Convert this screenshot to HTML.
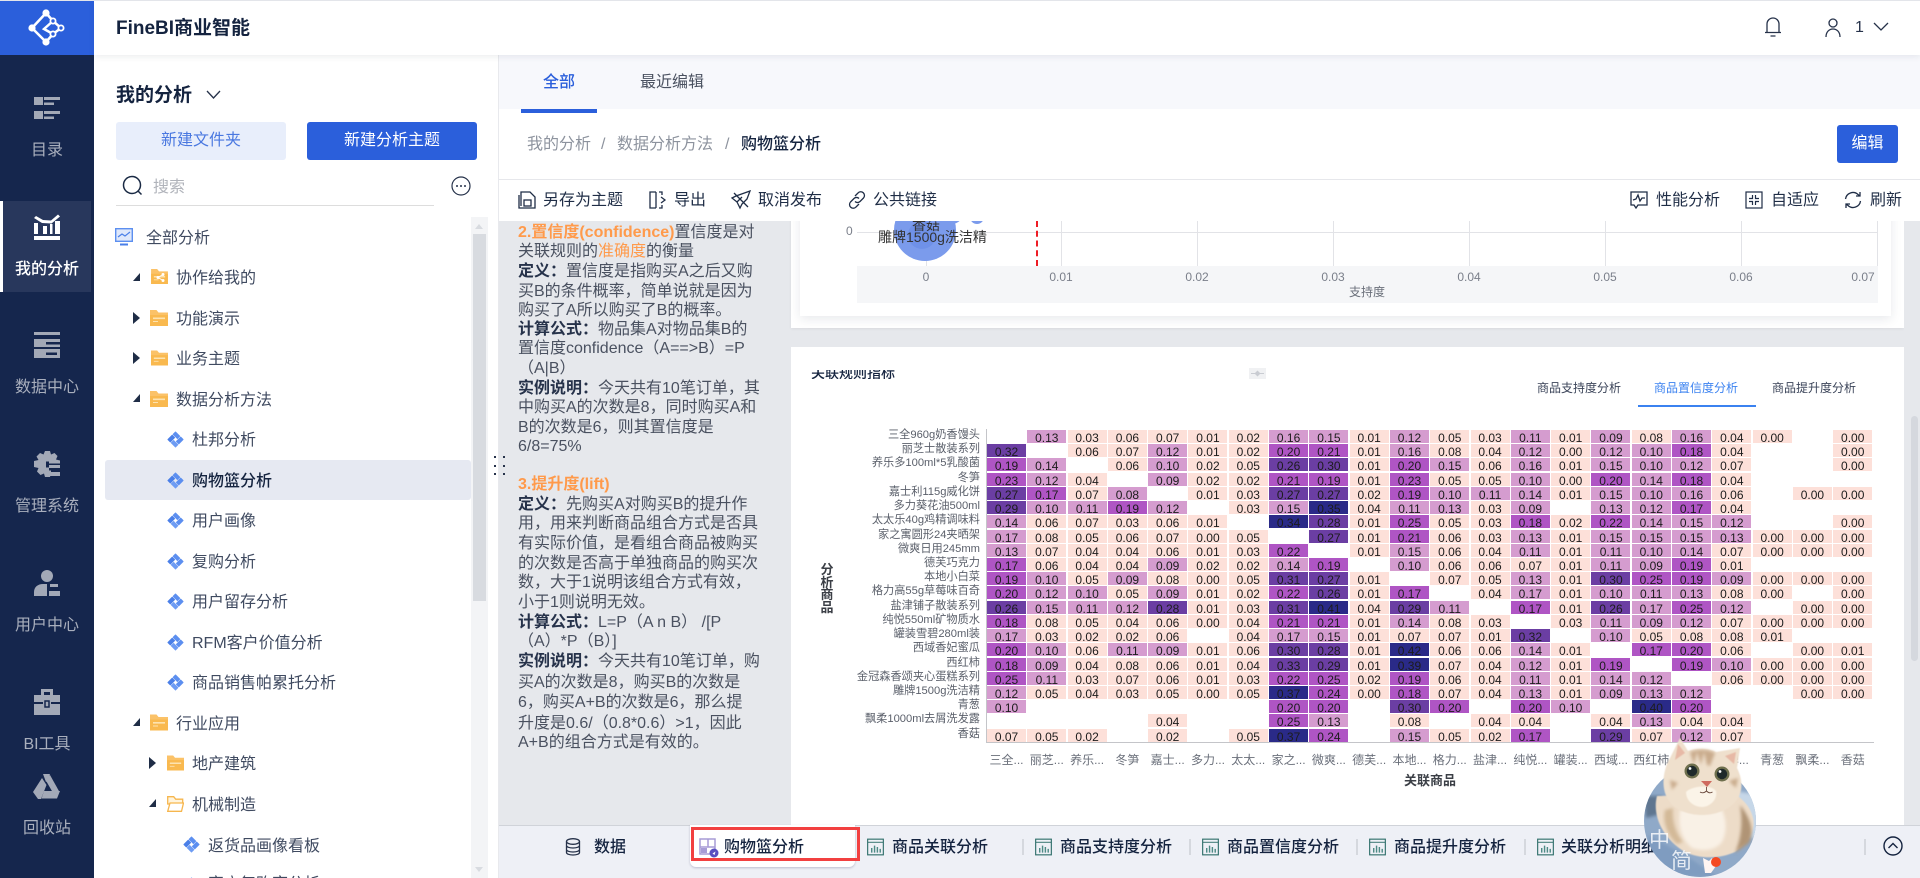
<!DOCTYPE html>
<html lang="zh">
<head>
<meta charset="utf-8">
<title>FineBI商业智能</title>
<style>
*{box-sizing:border-box}
html,body{margin:0;padding:0;width:1920px;height:878px;overflow:hidden;background:#fff;font-family:"Liberation Sans","Noto Sans CJK SC",sans-serif;color:#1f2d46}
#root{position:relative;width:1920px;height:878px;overflow:hidden}
.p{position:absolute}
.t{position:absolute;white-space:nowrap;line-height:20px;font-size:16px;margin-top:2px}
.rail{left:0;top:0;width:94px;height:878px;background:#15264d}
.r{left:0;width:94px;text-align:center;color:#a9afbd}
.tree{color:#3f4a60}
.g{fill:#a3a9b7}
.col{color:#4a5160}
.col .t{margin-top:1px}
.col b{color:#26324a;font-weight:700}
.col u{text-decoration:none;color:#ff9a4b;font-weight:700}
.col s{text-decoration:none;color:#ff9a4b}
.hm{position:absolute;left:987px;top:430px;display:grid;grid-template-columns:repeat(22,39px);grid-auto-rows:13px;column-gap:1.3px;row-gap:1.23px}
.hm i{font-style:normal;font-size:12px;line-height:16px;text-align:center;color:#1c1c1c;overflow:hidden;display:block}
.a{background:#fde0d9}.b{background:#d59ccf}.c{background:#af55c4}.d{background:#6b3ea3}.e{background:#2a2a88}
.rl{position:absolute;left:800px;width:180px;top:429px;display:grid;grid-auto-rows:13px;row-gap:1.23px;text-align:right;font-size:11.2px;line-height:13px;color:#5a5f6a;white-space:nowrap}
.xl{position:absolute;left:987px;top:753px;display:grid;grid-template-columns:repeat(22,39px);column-gap:1.3px;text-align:center;font-size:12px;line-height:14px;color:#6a6f7a;white-space:nowrap}
.tick{position:absolute;width:56px;text-align:center;font-size:12px;line-height:14px;top:270px;color:#7a7f8a}
.vg{position:absolute;top:221px;width:1px;height:45px;background:#e2e3e7}
.sep{position:absolute;top:839px;width:2px;height:16px;background:#d5d8de}
.bt{position:absolute;top:838px;line-height:20px;font-size:16px;font-weight:500;color:#14233f;white-space:nowrap}
</style>
</head>
<body>
<div id="root">
<svg width="0" height="0" style="position:absolute">
<defs>
<symbol id="fold" viewBox="0 0 18 16"><path d="M0 0h6.500l2 2.500H18V16H0z" fill="#fbc268"/><path d="M0 5h18v11H0z" fill="#f9b94f"/><path d="M3 7.500h12v1.600H3zM3 11h5v1H3z" fill="#fde3b0"/></symbol>
<symbol id="dia" viewBox="0 0 18 18"><g stroke-width="1" stroke-linejoin="round"><path d="M9 1l4.500 4.500L11 8 6.500 3.500z" fill="#5c8ff0" stroke="#5c8ff0"/><path d="M17 9l-4.500 4.500L10 11l4.500-4.500z" fill="#5c8ff0" stroke="#5c8ff0"/><path d="M9 17l-4.500-4.500L7 10l4.500 4.500z" fill="#6e9cf3" stroke="#6e9cf3"/><path d="M1 9l4.500-4.500L8 7l-4.500 4.500z" fill="#4a7fe8" stroke="#4a7fe8"/></g></symbol>
<symbol id="bar" viewBox="0 0 18 18"><rect x=".7" y=".7" width="16.600" height="16.600" fill="none" stroke="#2f6f6a" stroke-width="1.200"/><path d="M1 4h16" stroke="#2f6f6a"/><path d="M5 10v5M8 7.500v7.500M11 9v6M14 11v4" stroke="#4d8a85" stroke-width="1.500"/></symbol>
</defs>
</svg>

<!-- left rail -->
<div class="p" style="left:0;top:0;width:1920px;height:1px;background:#e3e5ea;z-index:9"></div>
<div class="p rail"></div>
<div class="p" style="left:0;top:1px;width:94px;height:54px;background:#2b5fdb"></div>
<svg class="p" style="left:26px;top:6px" width="42" height="42" viewBox="26 6 42 42">
<g stroke="#fff" stroke-width="2.500" fill="none"><path d="M46 13L32 28l14 14M46 13l7 8 8 7-8 6-7 8M53 21l-9 8 9 5"/></g>
<g fill="#fff"><circle cx="46" cy="13" r="3.600"/><circle cx="32" cy="28" r="3.600"/><circle cx="46" cy="42" r="3.600"/></g>
<g fill="#2b5fdb" stroke="#fff" stroke-width="1.800"><circle cx="53" cy="21" r="2.600"/><circle cx="61" cy="28" r="2.600"/><circle cx="53" cy="34" r="2.600"/></g>
</svg>
<svg class="p" style="left:34px;top:97px" width="26" height="22" viewBox="0 0 26 22"><g class="g"><rect width="9" height="8"/><rect y="14" width="9" height="8"/><rect x="10" width="16" height="3"/><rect x="10" y="5.500" width="10" height="2.500"/><rect x="10" y="14" width="16" height="3"/><rect x="10" y="19.500" width="10" height="2.500"/></g></svg>
<div class="t r" style="top:139px">目录</div>
<div class="p" style="left:0;top:201px;width:91px;height:91px;background:#28375c"></div>
<div class="p" style="left:0;top:201px;width:3px;height:91px;background:#fff"></div>
<svg class="p" style="left:34px;top:214px" width="26" height="26" viewBox="0 0 26 26"><g fill="#fff"><rect y="22" width="26" height="4"/><rect y="9" width="4" height="11"/><rect x="9" y="12" width="4" height="8"/><rect x="16" y="10" width="2.500" height="10"/><rect x="21" y="7" width="5" height="13"/><path d="M0 4l2-2 7 4 8 .5 7-6 2 2-8.500 7L8 9z"/></g></svg>
<div class="t r" style="top:258px;color:#fff;font-weight:500">我的分析</div>
<svg class="p" style="left:34px;top:332px" width="26" height="26" viewBox="0 0 26 26"><g class="g"><rect width="26" height="3"/><rect y="7" width="26" height="8"/><rect y="17" width="26" height="9"/></g><rect x="12" y="10" width="14" height="2.500" fill="#15264d"/><rect x="12" y="20.500" width="11" height="2.500" fill="#15264d"/></svg>
<div class="t r" style="top:376px">数据中心</div>
<svg class="p" style="left:34px;top:451px" width="26" height="26" viewBox="0 0 26 26"><path class="g" d="M11 0h5l1 3.500 3.500-1.500 3 3L22 8.500l4 1v3h-11v-2h-3v6h3v3h2v3l-1 3.500h-5l-1-3.500-3.500 1.500-3.500-3.500L4.500 17 0 16v-6l4.500-1L2.500 5.500 6 2l3.500 1.500z"/><rect class="g" x="15" y="14" width="11" height="3"/><rect class="g" x="15" y="21" width="11" height="4"/></svg>
<div class="t r" style="top:495px">管理系统</div>
<svg class="p" style="left:34px;top:570px" width="26" height="26" viewBox="0 0 26 26"><g class="g"><circle cx="13" cy="6" r="6"/><path d="M0 26v-4c0-5 4-8 9-8h4v12z"/><rect x="16" y="14" width="8" height="3"/><rect x="15" y="21" width="11" height="5"/></g></svg>
<div class="t r" style="top:614px">用户中心</div>
<svg class="p" style="left:34px;top:689px" width="26" height="26" viewBox="0 0 26 26"><g class="g"><path d="M7 6V0h12v6h-3V3h-6v3z"/><rect y="6" width="26" height="7"/><path d="M0 15h9v-2h8v2h9v11H0z"/></g><rect x="11" y="12" width="4" height="6" fill="#a3a9b7" stroke="#15264d" stroke-width="1.500"/></svg>
<div class="t r" style="top:733px">BI工具</div>
<svg class="p" style="left:33px;top:774px" width="27" height="25" viewBox="0 0 27 25"><g class="g"><path d="M10 0h7l-3 7-1 1z"/><path d="M17 1l9.500 17h-7L12 5z"/><path d="M9 4l4.500 7L8 25H5L0 18z"/><path d="M11 17h16l-3 7.500H8.500z"/></g></svg>
<div class="t r" style="top:817px">回收站</div>

<!-- header -->
<div class="p" style="left:94px;top:1px;width:1826px;height:54px;background:#fff;box-shadow:0 2px 6px rgba(30,40,70,.08);z-index:3"></div>
<div class="t" style="left:116px;top:17px;font-size:19px;font-weight:700;color:#14233f;z-index:4">FineBI商业智能</div>
<svg class="p" style="left:1764px;top:16px;z-index:4" width="18" height="22" viewBox="0 0 18 22" fill="none" stroke="#26324a" stroke-width="1.300"><path d="M3 16V8a6 6 0 0 1 12 0v8M1 16.500h16M6.500 20h5"/></svg>
<svg class="p" style="left:1824px;top:17px;z-index:4" width="18" height="22" viewBox="0 0 18 22" fill="none" stroke="#26324a" stroke-width="1.300"><circle cx="9" cy="6" r="4"/><path d="M2 20c0-5 3-8 7-8s7 3 7 8"/></svg>
<div class="t" style="left:1855px;top:16px;font-size:16px;color:#26324a;z-index:4">1</div>
<svg class="p" style="left:1873px;top:22px;z-index:4" width="16" height="10" viewBox="0 0 16 10" fill="none" stroke="#26324a" stroke-width="1.300"><path d="M1 1l7 7 7-7"/></svg>

<!-- tree panel -->
<div class="t" style="left:116px;top:84px;font-size:19px;font-weight:700;color:#14233f">我的分析</div>
<svg class="p" style="left:206px;top:90px" width="15" height="10" viewBox="0 0 15 10" fill="none" stroke="#26324a" stroke-width="1.300"><path d="M1 1l6.500 7L14 1"/></svg>
<div class="p" style="left:116px;top:122px;width:170px;height:38px;background:#e8eefb;border-radius:3px;text-align:center;line-height:38px;font-size:16px;color:#4a78e0">新建文件夹</div>
<div class="p" style="left:307px;top:122px;width:170px;height:38px;background:#2b5fdb;border-radius:3px;text-align:center;line-height:38px;font-size:16px;color:#fff">新建分析主题</div>
<svg class="p" style="left:122px;top:175px" width="21" height="21" viewBox="0 0 21 21" fill="none" stroke="#1a2a44" stroke-width="1.500"><circle cx="10" cy="10" r="8.500"/><path d="M16 16l3.500 3.500"/></svg>
<div class="t" style="left:153px;top:176px;color:#b0b3ba">搜索</div>
<div class="p" style="left:116px;top:205px;width:318px;height:1px;background:#ddd"></div>
<svg class="p" style="left:451px;top:176px" width="20" height="20" viewBox="0 0 20 20"><circle cx="10" cy="10" r="9" fill="none" stroke="#26324a" stroke-width="1.200"/><g fill="#26324a"><circle cx="6" cy="10" r="1"/><circle cx="10" cy="10" r="1"/><circle cx="14" cy="10" r="1"/></g></svg>
<div class="p" style="left:471px;top:217px;width:17px;height:661px;background:#f3f4f6"></div>
<div class="p" style="left:473px;top:234px;width:13px;height:367px;background:#d8dbe0"></div>
<div class="p" style="left:475px;top:224px;width:0;height:0;border:4px solid transparent;border-bottom:5px solid #d8dbe0;border-top:0"></div>
<div class="p" style="left:475px;top:867px;width:0;height:0;border:4px solid transparent;border-top:5px solid #d8dbe0;border-bottom:0"></div>
<div class="p" style="left:105px;top:460px;width:366px;height:40px;background:#e6e9f2;border-radius:3px"></div>

<svg class="p" style="left:115px;top:228px" width="18" height="18" viewBox="0 0 18 18"><rect x=".7" y=".7" width="16.600" height="12.600" fill="#dfe8fb" stroke="#5c8ff0" stroke-width="1.400"/><path d="M3 9l4-3 3 2 5-4" fill="none" stroke="#4a7fe8" stroke-width="1.200"/><rect x="5" y="15.500" width="8" height="2" fill="#4a7fe8"/></svg>
<div class="t tree" style="left:146px;top:227px">全部分析</div>

<svg class="p" style="left:133px;top:273px" width="7" height="8" viewBox="0 0 7 8"><path d="M7 0v8H0z" fill="#1f2d46"/></svg>
<svg class="p" style="left:151px;top:269px" width="17" height="15"><use href="#fold"/></svg>
<svg class="p" style="left:156px;top:273px" width="9" height="9" viewBox="0 0 9 9" fill="#fff"><circle cx="2" cy="4.500" r="1.500"/><circle cx="7" cy="1.500" r="1.500"/><circle cx="7" cy="7.500" r="1.500"/><path d="M2 4.500L7 1.500M2 4.500L7 7.500" stroke="#fff"/></svg>
<div class="t tree" style="left:176px;top:267px">协作给我的</div>

<svg class="p" style="left:133px;top:312px" width="7" height="12" viewBox="0 0 7 12"><path d="M0 0l7 6-7 6z" fill="#1f2d46"/></svg>
<svg class="p" style="left:150px;top:310px" width="18" height="16"><use href="#fold"/></svg>
<div class="t tree" style="left:176px;top:308px">功能演示</div>

<svg class="p" style="left:133px;top:352px" width="7" height="12" viewBox="0 0 7 12"><path d="M0 0l7 6-7 6z" fill="#1f2d46"/></svg>
<svg class="p" style="left:151px;top:350px" width="17" height="16"><use href="#fold"/></svg>
<div class="t tree" style="left:176px;top:348px">业务主题</div>

<svg class="p" style="left:133px;top:394px" width="7" height="8" viewBox="0 0 7 8"><path d="M7 0v8H0z" fill="#1f2d46"/></svg>
<svg class="p" style="left:150px;top:391px" width="18" height="16"><use href="#fold"/></svg>
<div class="t tree" style="left:176px;top:389px">数据分析方法</div>

<svg class="p" style="left:167px;top:431px" width="17" height="17"><use href="#dia"/></svg>
<div class="t tree" style="left:192px;top:429px">杜邦分析</div>
<svg class="p" style="left:167px;top:472px" width="17" height="17"><use href="#dia"/></svg>
<div class="t" style="left:192px;top:470px;font-weight:500;color:#14233f">购物篮分析</div>
<svg class="p" style="left:167px;top:512px" width="17" height="17"><use href="#dia"/></svg>
<div class="t tree" style="left:192px;top:510px">用户画像</div>
<svg class="p" style="left:167px;top:553px" width="17" height="17"><use href="#dia"/></svg>
<div class="t tree" style="left:192px;top:551px">复购分析</div>
<svg class="p" style="left:167px;top:593px" width="17" height="17"><use href="#dia"/></svg>
<div class="t tree" style="left:192px;top:591px">用户留存分析</div>
<svg class="p" style="left:167px;top:634px" width="17" height="17"><use href="#dia"/></svg>
<div class="t tree" style="left:192px;top:632px">RFM客户价值分析</div>
<svg class="p" style="left:167px;top:674px" width="17" height="17"><use href="#dia"/></svg>
<div class="t tree" style="left:192px;top:672px">商品销售帕累托分析</div>

<svg class="p" style="left:133px;top:718px" width="7" height="8" viewBox="0 0 7 8"><path d="M7 0v8H0z" fill="#1f2d46"/></svg>
<svg class="p" style="left:150px;top:714px" width="18" height="17"><use href="#fold"/></svg>
<div class="t tree" style="left:176px;top:713px">行业应用</div>
<svg class="p" style="left:149px;top:757px" width="7" height="12" viewBox="0 0 7 12"><path d="M0 0l7 6-7 6z" fill="#1f2d46"/></svg>
<svg class="p" style="left:167px;top:755px" width="17" height="16"><use href="#fold"/></svg>
<div class="t tree" style="left:192px;top:753px">地产建筑</div>
<svg class="p" style="left:149px;top:799px" width="7" height="8" viewBox="0 0 7 8"><path d="M7 0v8H0z" fill="#1f2d46"/></svg>
<svg class="p" style="left:167px;top:796px" width="17" height="16" viewBox="0 0 17 16"><path d="M.7.7h6l2 2.500h7V8H.7z" fill="#fff4dc" stroke="#f6b64e" stroke-width="1.300"/><path d="M.7 15.300L3 7h13.500l-2 8.300z" fill="#fff" stroke="#f6b64e" stroke-width="1.300"/></svg>
<div class="t tree" style="left:192px;top:794px">机械制造</div>
<svg class="p" style="left:183px;top:836px" width="17" height="17"><use href="#dia"/></svg>
<div class="t tree" style="left:208px;top:835px">返货品画像看板</div>
<svg class="p" style="left:183px;top:877px" width="17" height="17"><use href="#dia"/></svg>
<div class="t tree" style="left:208px;top:873px">客户复购率分析</div>

<!-- main -->
<div class="p" style="left:498px;top:55px;width:1px;height:823px;background:#e8e9ed"></div>
<div class="p" style="left:499px;top:221px;width:1421px;height:604px;background:#e6e8ec"></div>

<!-- text column -->
<div class="col">
<div class="t" style="left:518px;top:222px"><u>2.置信度(confidence)</u>置信度是对</div>
<div class="t" style="left:518px;top:241px">关联规则的<s>准确度</s>的衡量</div>
<div class="t" style="left:518px;top:261px"><b>定义：</b>置信度是指购买A之后又购</div>
<div class="t" style="left:518px;top:281px">买B的条件概率，简单说就是因为</div>
<div class="t" style="left:518px;top:300px">购买了A所以购买了B的概率。</div>
<div class="t" style="left:518px;top:319px"><b>计算公式：</b>物品集A对物品集B的</div>
<div class="t" style="left:518px;top:338px">置信度confidence（A==&gt;B）=P</div>
<div class="t" style="left:518px;top:358px">（A|B）</div>
<div class="t" style="left:518px;top:378px"><b>实例说明：</b>今天共有10笔订单，其</div>
<div class="t" style="left:518px;top:397px">中购买A的次数是8，同时购买A和</div>
<div class="t" style="left:518px;top:417px">B的次数是6，则其置信度是</div>
<div class="t" style="left:518px;top:436px">6/8=75%</div>
<div class="t" style="left:518px;top:474px"><u>3.提升度(lift)</u></div>
<div class="t" style="left:518px;top:494px"><b>定义：</b>先购买A对购买B的提升作</div>
<div class="t" style="left:518px;top:513px">用，用来判断商品组合方式是否具</div>
<div class="t" style="left:518px;top:533px">有实际价值，是看组合商品被购买</div>
<div class="t" style="left:518px;top:553px">的次数是否高于单独商品的购买次</div>
<div class="t" style="left:518px;top:572px">数，大于1说明该组合方式有效，</div>
<div class="t" style="left:518px;top:592px">小于1则说明无效。</div>
<div class="t" style="left:518px;top:612px"><b>计算公式：</b>L=P（A n B） /[P</div>
<div class="t" style="left:518px;top:631px">（A）*P（B）]</div>
<div class="t" style="left:518px;top:651px"><b>实例说明：</b>今天共有10笔订单，购</div>
<div class="t" style="left:518px;top:672px">买A的次数是8，购买B的次数是</div>
<div class="t" style="left:518px;top:692px">6，购买A+B的次数是6，那么提</div>
<div class="t" style="left:518px;top:713px">升度是0.6/（0.8*0.6）&gt;1，因此</div>
<div class="t" style="left:518px;top:732px">A+B的组合方式是有效的。</div>
</div>
<div class="p" style="left:494px;top:456px;width:2px;height:2px;background:#26324a;box-shadow:0 9px #26324a,0 17px #26324a,9px 0 #26324a,9px 9px #26324a,9px 17px #26324a"></div>

<!-- top chart -->
<div class="p" style="left:791px;top:200px;width:1113px;height:128px;background:#fff;box-shadow:0 1px 3px rgba(0,0,0,.06)"></div>
<div class="p" style="left:800px;top:200px;width:1091px;height:116px;background:#fff;box-shadow:0 3px 10px rgba(30,40,70,.1)"></div>
<div class="p" style="left:857px;top:232px;width:1021px;height:1px;background:#e2e3e7"></div>
<div class="vg" style="left:926px"></div><div class="vg" style="left:1061px"></div><div class="vg" style="left:1197px"></div><div class="vg" style="left:1333px"></div><div class="vg" style="left:1469px"></div><div class="vg" style="left:1605px"></div><div class="vg" style="left:1741px"></div><div class="vg" style="left:1877px"></div>
<div class="p" style="left:857px;top:266px;width:1021px;height:37px;background:#f5f6f8"></div>
<div class="p" style="left:1036px;top:221px;width:0;height:45px;border-left:2px dashed #ee1c25"></div>
<svg class="p" style="left:880px;top:221px" width="120" height="45" viewBox="880 221 120 45"><circle cx="925" cy="230" r="31" fill="#7b9bec"/><circle cx="922" cy="235" r="14" fill="#6f91e8"/><circle cx="952" cy="213" r="11" fill="#7b9bec"/><circle cx="977" cy="217" r="7" fill="#7b9bec"/></svg>
<div class="t" style="left:846px;top:219px;font-size:12px;color:#7a7f8a">0</div>
<div class="p" style="left:900px;top:221px;width:52px;height:11px;overflow:hidden;text-align:center"><div style="font-size:14px;line-height:20px;margin-top:-6px;color:#333">香菇</div></div>
<div class="t" style="left:878px;top:225px;width:98px;text-align:center;font-size:14px;color:#333">雕牌1500g洗洁精</div>
<div class="tick" style="left:898px">0</div><div class="tick" style="left:1033px">0.01</div><div class="tick" style="left:1169px">0.02</div><div class="tick" style="left:1305px">0.03</div><div class="tick" style="left:1441px">0.04</div><div class="tick" style="left:1577px">0.05</div><div class="tick" style="left:1713px">0.06</div><div class="tick" style="left:1835px">0.07</div>
<div class="t" style="left:1349px;top:280px;font-size:12px;color:#6a6f7a">支持度</div>

<!-- heatmap panel -->
<div class="p" style="left:791px;top:347px;width:1113px;height:478px;background:#fff"></div>
<div class="p" style="left:811px;top:370px;width:90px;height:9px;overflow:hidden"><div style="margin-top:-7px;font-size:14px;line-height:20px;font-weight:500;color:#14233f;white-space:nowrap">关联规则指标</div></div>
<div class="p" style="left:1249px;top:368px;width:17px;height:11px;background:#f0f1f3"></div>
<svg class="p" style="left:1251px;top:369px" width="13" height="9" viewBox="0 0 13 9"><path d="M0 4.500h13" stroke="#c9ccd2"/><path d="M6.500 1.500l3 3-3 3-3-3z" fill="#c9ccd2"/></svg>
<div class="t" style="left:1537px;top:376px;font-size:12px;color:#3a4358">商品支持度分析</div>
<div class="t" style="left:1654px;top:376px;font-size:12px;color:#3b82f0">商品置信度分析</div>
<div class="p" style="left:1638px;top:405px;width:118px;height:2px;background:#3b82f0"></div>
<div class="t" style="left:1772px;top:376px;font-size:12px;color:#3a4358">商品提升度分析</div>
<div class="p" style="left:1904px;top:221px;width:16px;height:604px;background:#e6e8ec"></div>
<div class="p" style="left:1911px;top:416px;width:7px;height:245px;background:#d5d8de;border-radius:4px"></div>

<div class="rl"><div>三全960g奶香馒头</div><div>丽芝士散装系列</div><div>养乐多100ml*5乳酸菌</div><div>冬笋</div><div>嘉士利115g威化饼</div><div>多力葵花油500ml</div><div>太太乐40g鸡精调味料</div><div>家之寓圆形24夹晒架</div><div>微爽日用245mm</div><div>德芙巧克力</div><div>本地小白菜</div><div>格力高55g草莓味百奇</div><div>盐津铺子散装系列</div><div>纯悦550ml矿物质水</div><div>罐装雪碧280ml装</div><div>西域香妃蜜瓜</div><div>西红柿</div><div>金冠森香颂夹心蛋糕系列</div><div>雕牌1500g洗洁精</div><div>青葱</div><div>飘柔1000ml去屑洗发露</div><div>香菇</div></div>

<div class="t" style="left:820px;top:562px;width:14px;font-size:13px;line-height:12.500px;font-weight:700;color:#3b3f46;white-space:normal;text-align:center">分析商品</div>

<div class="hm">
<i></i><i class=b>0.13</i><i class=a>0.03</i><i class=a>0.06</i><i class=a>0.07</i><i class=a>0.01</i><i class=a>0.02</i><i class=b>0.16</i><i class=b>0.15</i><i class=a>0.01</i><i class=b>0.12</i><i class=a>0.05</i><i class=a>0.03</i><i class=b>0.11</i><i class=a>0.01</i><i class=b>0.09</i><i class=a>0.08</i><i class=b>0.16</i><i class=a>0.04</i><i class=a>0.00</i><i></i><i class=a>0.00</i>
<i class=d>0.32</i><i></i><i class=a>0.06</i><i class=a>0.07</i><i class=b>0.12</i><i class=a>0.01</i><i class=a>0.02</i><i class=c>0.20</i><i class=c>0.21</i><i class=a>0.01</i><i class=b>0.16</i><i class=a>0.08</i><i class=a>0.04</i><i class=b>0.12</i><i class=a>0.00</i><i class=b>0.12</i><i class=b>0.10</i><i class=c>0.18</i><i class=a>0.04</i><i></i><i></i><i class=a>0.00</i>
<i class=c>0.19</i><i class=b>0.14</i><i></i><i class=a>0.06</i><i class=b>0.10</i><i class=a>0.02</i><i class=a>0.05</i><i class=d>0.26</i><i class=d>0.30</i><i class=a>0.01</i><i class=c>0.20</i><i class=b>0.15</i><i class=a>0.06</i><i class=b>0.16</i><i class=a>0.01</i><i class=b>0.15</i><i class=b>0.10</i><i class=b>0.12</i><i class=a>0.07</i><i></i><i></i><i class=a>0.00</i>
<i class=c>0.23</i><i class=b>0.12</i><i class=a>0.04</i><i></i><i class=b>0.09</i><i class=a>0.02</i><i class=a>0.02</i><i class=c>0.21</i><i class=c>0.19</i><i class=a>0.01</i><i class=c>0.23</i><i class=a>0.05</i><i class=a>0.05</i><i class=b>0.10</i><i class=a>0.00</i><i class=c>0.20</i><i class=b>0.14</i><i class=c>0.18</i><i class=a>0.04</i><i></i><i></i><i></i>
<i class=d>0.27</i><i class=c>0.17</i><i class=a>0.07</i><i class=b>0.08</i><i></i><i class=a>0.01</i><i class=a>0.03</i><i class=d>0.27</i><i class=d>0.27</i><i class=a>0.02</i><i class=c>0.19</i><i class=b>0.10</i><i class=b>0.11</i><i class=b>0.14</i><i class=a>0.01</i><i class=b>0.15</i><i class=b>0.10</i><i class=b>0.16</i><i class=a>0.06</i><i></i><i class=a>0.00</i><i class=a>0.00</i>
<i class=d>0.29</i><i class=b>0.10</i><i class=b>0.11</i><i class=c>0.19</i><i class=b>0.12</i><i></i><i class=a>0.03</i><i class=b>0.15</i><i class=e>0.35</i><i class=a>0.04</i><i class=b>0.11</i><i class=b>0.13</i><i class=a>0.03</i><i class=b>0.09</i><i></i><i class=b>0.13</i><i class=b>0.12</i><i class=c>0.17</i><i class=a>0.04</i><i></i><i></i><i></i>
<i class=b>0.14</i><i class=a>0.06</i><i class=a>0.07</i><i class=a>0.03</i><i class=a>0.06</i><i class=a>0.01</i><i></i><i class=e>0.34</i><i class=d>0.28</i><i class=a>0.01</i><i class=c>0.25</i><i class=a>0.05</i><i class=a>0.03</i><i class=c>0.18</i><i class=a>0.02</i><i class=c>0.22</i><i class=b>0.14</i><i class=b>0.15</i><i class=b>0.12</i><i></i><i></i><i class=a>0.00</i>
<i class=b>0.17</i><i class=a>0.08</i><i class=a>0.05</i><i class=a>0.06</i><i class=a>0.07</i><i class=a>0.00</i><i class=a>0.05</i><i></i><i class=d>0.27</i><i class=a>0.01</i><i class=c>0.21</i><i class=a>0.06</i><i class=a>0.03</i><i class=b>0.13</i><i class=a>0.01</i><i class=b>0.15</i><i class=b>0.15</i><i class=b>0.15</i><i class=b>0.13</i><i class=a>0.00</i><i class=a>0.00</i><i class=a>0.00</i>
<i class=b>0.13</i><i class=a>0.07</i><i class=a>0.04</i><i class=a>0.04</i><i class=a>0.06</i><i class=a>0.01</i><i class=a>0.03</i><i class=c>0.22</i><i></i><i class=a>0.01</i><i class=b>0.15</i><i class=a>0.06</i><i class=a>0.04</i><i class=b>0.11</i><i class=a>0.01</i><i class=b>0.11</i><i class=b>0.10</i><i class=b>0.14</i><i class=a>0.07</i><i class=a>0.00</i><i class=a>0.00</i><i class=a>0.00</i>
<i class=c>0.17</i><i class=a>0.06</i><i class=a>0.04</i><i class=a>0.04</i><i class=b>0.09</i><i class=a>0.02</i><i class=a>0.02</i><i class=b>0.14</i><i class=c>0.19</i><i></i><i class=b>0.10</i><i class=a>0.06</i><i class=a>0.06</i><i class=a>0.07</i><i class=a>0.01</i><i class=b>0.11</i><i class=b>0.09</i><i class=c>0.19</i><i class=a>0.01</i><i></i><i></i><i></i>
<i class=c>0.19</i><i class=b>0.10</i><i class=a>0.05</i><i class=b>0.09</i><i class=a>0.08</i><i class=a>0.00</i><i class=a>0.05</i><i class=d>0.31</i><i class=d>0.27</i><i class=a>0.01</i><i></i><i class=a>0.07</i><i class=a>0.05</i><i class=b>0.13</i><i class=a>0.01</i><i class=d>0.30</i><i class=c>0.25</i><i class=c>0.19</i><i class=b>0.09</i><i class=a>0.00</i><i class=a>0.00</i><i class=a>0.00</i>
<i class=c>0.20</i><i class=b>0.12</i><i class=b>0.10</i><i class=a>0.05</i><i class=b>0.09</i><i class=a>0.01</i><i class=a>0.02</i><i class=c>0.22</i><i class=d>0.26</i><i class=a>0.01</i><i class=c>0.17</i><i></i><i class=a>0.04</i><i class=b>0.17</i><i class=a>0.01</i><i class=b>0.10</i><i class=b>0.11</i><i class=b>0.13</i><i class=a>0.08</i><i class=a>0.00</i><i></i><i class=a>0.00</i>
<i class=d>0.26</i><i class=b>0.15</i><i class=b>0.11</i><i class=b>0.12</i><i class=d>0.28</i><i class=a>0.01</i><i class=a>0.03</i><i class=d>0.31</i><i class=e>0.41</i><i class=a>0.04</i><i class=d>0.29</i><i class=b>0.11</i><i></i><i class=c>0.17</i><i class=a>0.01</i><i class=d>0.26</i><i class=b>0.17</i><i class=c>0.25</i><i class=b>0.12</i><i></i><i class=a>0.00</i><i class=a>0.00</i>
<i class=c>0.18</i><i class=a>0.08</i><i class=a>0.05</i><i class=a>0.04</i><i class=a>0.06</i><i class=a>0.00</i><i class=a>0.04</i><i class=c>0.21</i><i class=c>0.21</i><i class=a>0.01</i><i class=b>0.14</i><i class=a>0.08</i><i class=a>0.03</i><i></i><i class=a>0.03</i><i class=b>0.11</i><i class=b>0.09</i><i class=b>0.12</i><i class=a>0.07</i><i class=a>0.00</i><i class=a>0.00</i><i class=a>0.00</i>
<i class=b>0.17</i><i class=a>0.03</i><i class=a>0.02</i><i class=a>0.02</i><i class=a>0.06</i><i></i><i class=a>0.04</i><i class=b>0.17</i><i class=b>0.15</i><i class=a>0.01</i><i class=a>0.07</i><i class=a>0.07</i><i class=a>0.01</i><i class=d>0.32</i><i></i><i class=b>0.10</i><i class=a>0.05</i><i class=a>0.08</i><i class=a>0.08</i><i class=a>0.01</i><i></i><i></i>
<i class=c>0.20</i><i class=b>0.10</i><i class=a>0.06</i><i class=b>0.11</i><i class=b>0.09</i><i class=a>0.01</i><i class=a>0.06</i><i class=d>0.30</i><i class=d>0.28</i><i class=a>0.01</i><i class=e>0.42</i><i class=a>0.06</i><i class=a>0.06</i><i class=b>0.14</i><i class=a>0.01</i><i></i><i class=c>0.17</i><i class=c>0.20</i><i class=a>0.06</i><i></i><i class=a>0.00</i><i class=a>0.01</i>
<i class=c>0.18</i><i class=b>0.09</i><i class=a>0.04</i><i class=a>0.08</i><i class=a>0.06</i><i class=a>0.01</i><i class=a>0.04</i><i class=d>0.33</i><i class=d>0.29</i><i class=a>0.01</i><i class=e>0.39</i><i class=a>0.07</i><i class=a>0.04</i><i class=b>0.12</i><i class=a>0.01</i><i class=c>0.19</i><i></i><i class=c>0.19</i><i class=b>0.10</i><i class=a>0.00</i><i class=a>0.00</i><i class=a>0.00</i>
<i class=c>0.25</i><i class=b>0.11</i><i class=a>0.03</i><i class=a>0.07</i><i class=a>0.06</i><i class=a>0.01</i><i class=a>0.03</i><i class=c>0.22</i><i class=c>0.25</i><i class=a>0.02</i><i class=c>0.19</i><i class=a>0.06</i><i class=a>0.04</i><i class=b>0.11</i><i class=a>0.01</i><i class=b>0.14</i><i class=b>0.12</i><i></i><i class=a>0.06</i><i class=a>0.00</i><i class=a>0.00</i><i class=a>0.00</i>
<i class=b>0.12</i><i class=a>0.05</i><i class=a>0.04</i><i class=a>0.03</i><i class=a>0.05</i><i class=a>0.00</i><i class=a>0.05</i><i class=e>0.37</i><i class=c>0.24</i><i class=a>0.00</i><i class=c>0.18</i><i class=a>0.07</i><i class=a>0.04</i><i class=b>0.13</i><i class=a>0.01</i><i class=b>0.09</i><i class=b>0.13</i><i class=b>0.12</i><i></i><i></i><i class=a>0.00</i><i class=a>0.00</i>
<i class=b>0.10</i><i></i><i></i><i></i><i></i><i></i><i></i><i class=c>0.20</i><i class=c>0.20</i><i></i><i class=d>0.30</i><i class=c>0.20</i><i></i><i class=c>0.20</i><i class=b>0.10</i><i></i><i class=e>0.40</i><i class=c>0.20</i><i></i><i></i><i></i><i></i>
<i></i><i></i><i></i><i></i><i class=a>0.04</i><i></i><i></i><i class=c>0.25</i><i class=b>0.13</i><i></i><i class=a>0.08</i><i></i><i class=a>0.04</i><i class=a>0.04</i><i></i><i class=a>0.04</i><i class=b>0.13</i><i class=a>0.04</i><i class=a>0.04</i><i></i><i></i><i></i>
<i class=a>0.07</i><i class=a>0.05</i><i class=a>0.02</i><i></i><i class=a>0.02</i><i></i><i class=a>0.05</i><i class=e>0.37</i><i class=c>0.24</i><i></i><i class=b>0.15</i><i class=a>0.05</i><i class=a>0.02</i><i class=c>0.17</i><i></i><i class=d>0.29</i><i class=a>0.07</i><i class=b>0.12</i><i class=a>0.07</i><i></i><i></i><i></i>
</div>
<div class="p" style="left:986px;top:429px;width:1px;height:314px;background:#c4c5c9"></div>
<div class="p" style="left:986px;top:742px;width:888px;height:1px;background:#c4c5c9"></div>
<div class="xl"><div>三全...</div><div>丽芝...</div><div>养乐...</div><div>冬笋</div><div>嘉士...</div><div>多力...</div><div>太太...</div><div>家之...</div><div>微爽...</div><div>德芙...</div><div>本地...</div><div>格力...</div><div>盐津...</div><div>纯悦...</div><div>罐装...</div><div>西域...</div><div>西红柿</div><div>金冠...</div><div>雕牌...</div><div>青葱</div><div>飘柔...</div><div>香菇</div></div>
<div class="t" style="left:1404px;top:769px;font-size:13px;font-weight:700;color:#3b3f46">关联商品</div>

<!-- header area: tabs, breadcrumb, toolbar -->
<div class="p" style="left:499px;top:55px;width:1421px;height:54px;background:#f7f8fc"></div>
<div class="p" style="left:499px;top:109px;width:1421px;height:112px;background:#fff"></div>
<div class="t" style="left:543px;top:71px;color:#2b5fdb;font-weight:500">全部</div>
<div class="t" style="left:640px;top:71px;color:#4a5160">最近编辑</div>
<div class="p" style="left:521px;top:109px;width:76px;height:4px;background:#2b5fdb"></div>
<div class="t" style="left:527px;top:133px;color:#8d939e">我的分析</div>
<div class="t" style="left:601px;top:133px;font-size:16px;color:#8d939e">/</div>
<div class="t" style="left:617px;top:133px;color:#8d939e">数据分析方法</div>
<div class="t" style="left:725px;top:133px;font-size:16px;color:#8d939e">/</div>
<div class="t" style="left:741px;top:133px;font-weight:500;color:#14233f">购物篮分析</div>
<div class="p" style="left:1837px;top:125px;width:61px;height:38px;background:#2b5fdb;border-radius:3px;text-align:center;line-height:38px;font-size:16px;color:#fff">编辑</div>
<div class="p" style="left:499px;top:179px;width:1421px;height:1px;background:#e6e7eb"></div>

<svg class="p" style="left:518px;top:191px" width="18" height="18" viewBox="0 0 18 18" fill="none" stroke="#1f2d46" stroke-width="1.300"><path d="M3 15V1h9l5 5v11H1V4"/><rect x="6" y="9" width="7" height="6"/></svg>
<div class="t" style="left:543px;top:189px">另存为主题</div>
<svg class="p" style="left:649px;top:191px" width="18" height="18" viewBox="0 0 18 18" fill="none" stroke="#1f2d46" stroke-width="1.300"><path d="M7 1H1v16h6M7 1v16M10 1h3v3M10 17h3v-3M12 6l4 3-4 3"/></svg>
<div class="t" style="left:674px;top:189px">导出</div>
<svg class="p" style="left:731px;top:190px" width="20" height="20" viewBox="0 0 20 20" fill="none" stroke="#1f2d46" stroke-width="1.300"><path d="M19 1L5 6l-4 2 5 4 3 6 2-4 5-5zM6 12l5-5M3 3l14 14"/></svg>
<div class="t" style="left:758px;top:189px">取消发布</div>
<svg class="p" style="left:848px;top:191px" width="18" height="18" viewBox="0 0 18 18" fill="none" stroke="#1f2d46" stroke-width="1.300"><path d="M7 5l3-3a3.500 3.500 0 0 1 5.500 5L12 10.500a3.500 3.500 0 0 1-5 0M11 13l-3 3a3.500 3.500 0 0 1-5.500-5L6 7.500a3.500 3.500 0 0 1 5 0"/></svg>
<div class="t" style="left:873px;top:189px">公共链接</div>
<svg class="p" style="left:1630px;top:191px" width="18" height="18" viewBox="0 0 18 18" fill="none" stroke="#1f2d46" stroke-width="1.300"><path d="M4 14H1V1h16v13H8l-2 3zM3 9l3-1 2-4 2 6 2-3h3"/></svg>
<div class="t" style="left:1656px;top:189px">性能分析</div>
<svg class="p" style="left:1745px;top:191px" width="18" height="18" viewBox="0 0 18 18" fill="none" stroke="#1f2d46" stroke-width="1.200"><rect x="1" y="1" width="16" height="16"/><path d="M7.500 4v3.500H4M10.500 4v3.500H14M7.500 14v-3.500H4M10.500 14v-3.500H14"/></svg>
<div class="t" style="left:1771px;top:189px">自适应</div>
<svg class="p" style="left:1844px;top:191px" width="18" height="18" viewBox="0 0 18 18" fill="none" stroke="#1f2d46" stroke-width="1.300"><path d="M1.500 8A7.500 7.500 0 0 1 14 3.500L16 5M16.500 10A7.500 7.500 0 0 1 4 14.500L2 13M16 1v4h-4M2 17v-4h4"/></svg>
<div class="t" style="left:1870px;top:189px">刷新</div>

<!-- bottom bar -->
<div class="p" style="left:499px;top:825px;width:1421px;height:53px;background:#eef0f6;border-top:1px solid #d0d3d9"></div>
<svg class="p" style="left:565px;top:838px" width="16" height="18" viewBox="0 0 16 18" fill="none" stroke="#26324a" stroke-width="1.300"><ellipse cx="8" cy="3.500" rx="6.500" ry="2.800"/><path d="M1.500 3.500v11C1.500 16 4.500 17 8 17s6.500-1 6.500-2.500v-11M1.500 7.500C1.500 9 4.500 10 8 10s6.500-1 6.500-2.500M1.500 11.500C1.500 13 4.500 14 8 14s6.500-1 6.500-2.500"/></svg>
<div class="bt" style="left:594px">数据</div>
<div class="p" style="left:690px;top:825px;width:165px;height:42px;background:#fff;border-radius:0 0 6px 6px;box-shadow:0 1px 2px rgba(40,40,90,.25)"></div>
<svg class="p" style="left:699px;top:838px" width="20" height="20" viewBox="0 0 20 20"><rect x="1" y="1" width="15" height="15" fill="#fff" stroke="#a79cd6" stroke-width="1.500"/><path d="M1 9h15M9 1v8" stroke="#a79cd6" stroke-width="1.500"/><rect x="2" y="10" width="6" height="5" fill="#a79cd6"/><circle cx="15" cy="15" r="4.500" fill="#5a4fc0"/><path d="M13.500 15.500l3-2-1 3.500z" fill="#fff"/></svg>
<div class="bt" style="left:724px">购物篮分析</div>
<div class="p" style="left:691px;top:827px;width:169px;height:34px;border:3px solid #f24040"></div>
<svg class="p" style="left:867px;top:838px" width="17" height="18"><use href="#bar"/></svg>
<div class="bt" style="left:892px">商品关联分析</div>
<div class="sep" style="left:1022px"></div>
<svg class="p" style="left:1035px;top:838px" width="17" height="18"><use href="#bar"/></svg>
<div class="bt" style="left:1060px">商品支持度分析</div>
<div class="sep" style="left:1189px"></div>
<svg class="p" style="left:1202px;top:838px" width="17" height="18"><use href="#bar"/></svg>
<div class="bt" style="left:1227px">商品置信度分析</div>
<div class="sep" style="left:1356px"></div>
<svg class="p" style="left:1369px;top:838px" width="17" height="18"><use href="#bar"/></svg>
<div class="bt" style="left:1394px">商品提升度分析</div>
<div class="sep" style="left:1524px"></div>
<svg class="p" style="left:1537px;top:838px" width="17" height="18"><use href="#bar"/></svg>
<div class="bt" style="left:1561px">关联分析明细</div>
<div class="sep" style="left:1864px"></div>
<svg class="p" style="left:1883px;top:836px" width="20" height="20" viewBox="0 0 20 20" fill="none" stroke="#14233f" stroke-width="1.400"><circle cx="10" cy="10" r="9"/><path d="M5.500 12L10 7.500l4.500 4.500"/></svg>

<!-- cat avatar -->
<svg class="p" style="left:1640px;top:730px;z-index:5" width="125" height="148" viewBox="0 0 125 148">
<defs>
<clipPath id="cc"><circle cx="60" cy="91" r="56"/></clipPath>
<filter id="soft" x="-10%" y="-10%" width="120%" height="120%"><feGaussianBlur stdDeviation="1.500"/></filter>
<filter id="soft2" x="-10%" y="-10%" width="120%" height="120%"><feGaussianBlur stdDeviation=".6"/></filter>
</defs>
<g clip-path="url(#cc)">
<rect x="0" y="30" width="125" height="118" fill="#8fa9c8"/>
<path d="M4 66h18l6 16-22 6z" fill="#5f7690" filter="url(#soft)"/>
<path d="M90 60l30 5v45l-22-5z" fill="#c6d7e8" filter="url(#soft)"/>
<path d="M8 105l40 22 30 20H8z" fill="#7f9cc0" filter="url(#soft)"/>
<path d="M17 66C12 85 22 108 45 122c17 8 37 6 50 0 13-10 21-22 18-34-3-13-11-18-17-24z" fill="#eddcc8" filter="url(#soft2)"/>
<path d="M100 75c10 12 15 26 9 38l-14 10c6-14 8-30 5-48z" fill="#b09476" filter="url(#soft)"/>
<path d="M25 80c-3 12 3 26 12 34l6-2c-8-10-11-22-10-34z" fill="#d3b998" filter="url(#soft)"/>
<path d="M40 80c-2 14 0 28 12 38 12 4 24 2 30-6 6-12 4-26-2-36z" fill="#f9f1e6" filter="url(#soft)"/>
</g>
<path d="M27 34L40 8l8 13c8-3 20-3 28 1l24-4-3 20c6 12 6 24-1 33-8 10-22 14-34 14-12 0-26-4-33-14-7-10-7-24-2-37z" fill="#efe0cd" filter="url(#soft2)"/>
<path d="M38 14l7 9-10 7zM96 22l-11 4 9 8z" fill="#e7b9a6" filter="url(#soft2)"/>
<path d="M50 22c8-3 18-3 25 1l-5 13-3-1-3-13-3 13-4-13-3 13zM30 50l8 3-6 7zM98 48l-9 3 7 7z" fill="#c9ab8c" filter="url(#soft)"/>
<path d="M46 62c6-6 24-8 30-1 2 8-6 16-14 16s-16-6-16-15z" fill="#fbf4e8" filter="url(#soft2)"/>
<circle cx="52" cy="41" r="7.500" fill="#6e6f4d"/><circle cx="52" cy="41" r="5.200" fill="#1f2a2a"/><circle cx="50" cy="38.500" r="1.400" fill="#fff"/>
<circle cx="82" cy="44" r="7.500" fill="#6e6f4d"/><circle cx="82" cy="44" r="5.200" fill="#1f2a2a"/><circle cx="80" cy="41.500" r="1.400" fill="#fff"/>
<path d="M61 51h11l-5 6z" fill="#cf6a5e"/><path d="M66.500 57v4M60 62q3 2 6.500-1q3 3 6 1" fill="none" stroke="#6a4a3e" stroke-width=".9"/>
<path d="M63 128l6 3 3-3 4 8-5 7h-6z" fill="#fff5f2"/>
<circle cx="76" cy="132" r="5" fill="#f44a23"/>
<text x="9" y="117" font-size="21" fill="#fff" fill-opacity=".8" font-family="'Liberation Sans','Noto Sans CJK SC',sans-serif">中</text>
<text x="31" y="138" font-size="21" fill="#fff" fill-opacity=".8" font-family="'Liberation Sans','Noto Sans CJK SC',sans-serif">简</text>
</svg>
</div>
</body>
</html>
